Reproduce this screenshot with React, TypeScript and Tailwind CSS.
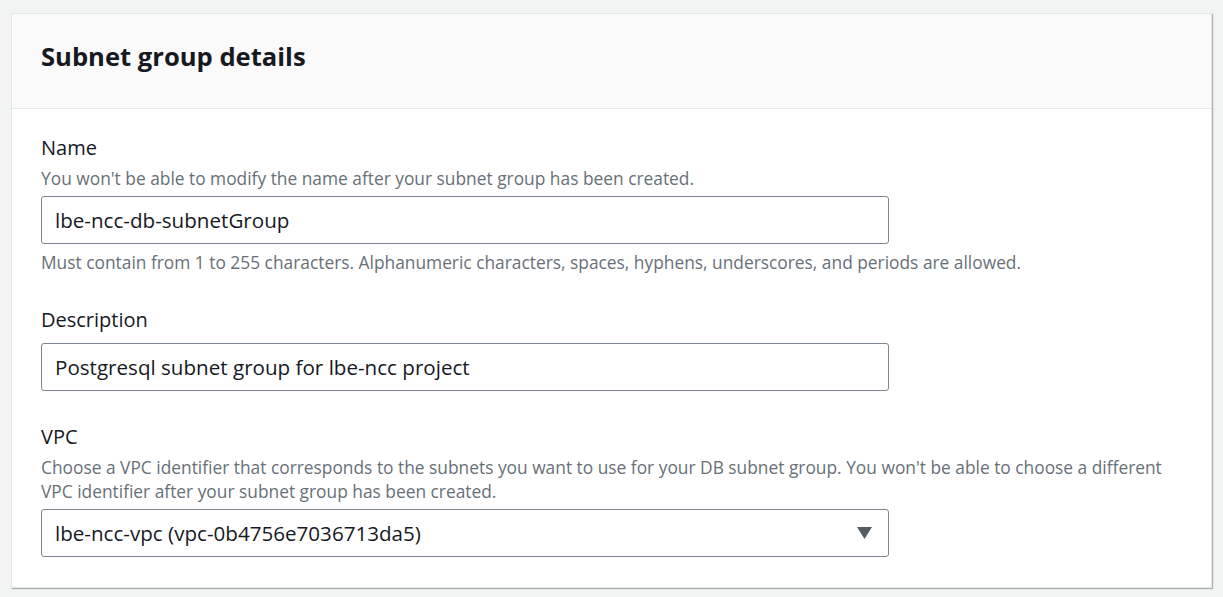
const Field = ({
  label,
  hint,
  value,
  select,
  footer,
}: {
  label: string;
  hint?: string;
  value: string;
  select?: boolean;
  footer?: string;
}) => (
  <div className="flex flex-col">
    <label className="text-[20px] leading-[28px] text-[#16191f]">{label}</label>
    {hint && (
      <p className="mt-[4px] text-[17.35px] leading-[24px] text-[#687078]">{hint}</p>
    )}
    <div
      className={`${hint ? "mt-[6px]" : "mt-[9px]"} w-[848px] h-[48px] border border-[#7d8690] rounded-[3px] bg-white flex items-center justify-between pl-[13px] pr-[16px]`}
    >
      <span className="text-[20.6px] text-[#16191f]">{value}</span>
      {select && (
        <svg width="15" height="12" viewBox="0 0 15 12">
          <path d="M0 0 L15 0 L7.5 12 Z" fill="#545b64" />
        </svg>
      )}
    </div>
    {footer && (
      <p className="mt-[6px] text-[17.35px] leading-[24px] text-[#687078]">{footer}</p>
    )}
  </div>
);

export default function App() {
  return (
    <div
      className="min-h-[597px] bg-[#f2f3f3] pt-[13px] pl-[11px] pr-[11px]"
      style={{ fontFamily: '"Open Sans", "Liberation Sans", sans-serif' }}
    >
      <div className="bg-white border border-[#e4e7e7] shadow-[1px_1px_1px_0_rgba(0,28,36,0.3)]">
        <div className="bg-[#fafafa] border-b border-[#e4e7e7] h-[95px] flex items-center px-[29px] pb-[8px]">
          <h2 className="text-[25.6px] font-bold text-[#16191f]">Subnet group details</h2>
        </div>
        <div className="px-[29px] pt-[25px] pb-[30px] flex flex-col gap-[32px]">
          <Field
            label="Name"
            hint="You won't be able to modify the name after your subnet group has been created."
            value="lbe-ncc-db-subnetGroup"
            footer="Must contain from 1 to 255 characters. Alphanumeric characters, spaces, hyphens, underscores, and periods are allowed."
          />
          <Field label="Description" value="Postgresql subnet group for lbe-ncc project" />
          <Field
            label="VPC"
            hint="Choose a VPC identifier that corresponds to the subnets you want to use for your DB subnet group. You won't be able to choose a different VPC identifier after your subnet group has been created."
            value="lbe-ncc-vpc (vpc-0b4756e7036713da5)"
            select
          />
        </div>
      </div>
    </div>
  );
}
